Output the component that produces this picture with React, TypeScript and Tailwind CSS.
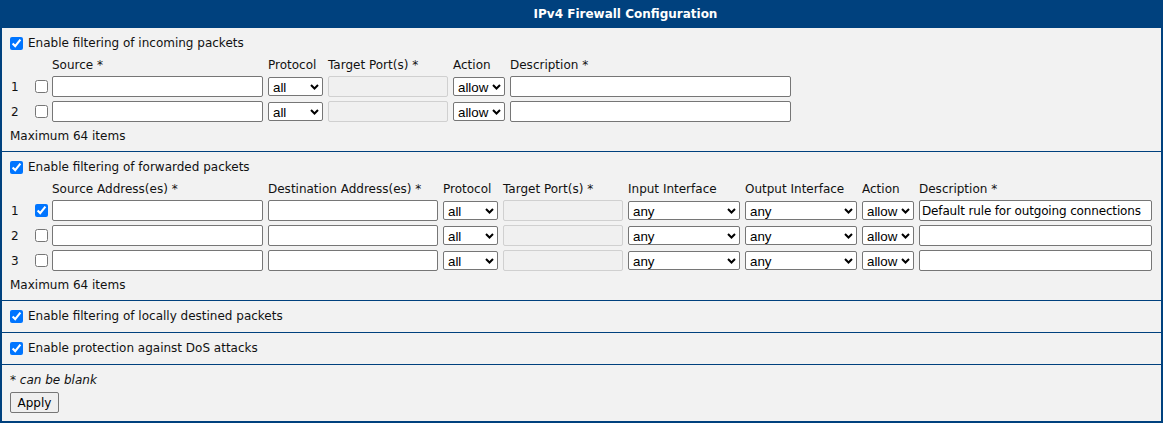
import React from "react";

const font = { fontFamily: '"DejaVu Sans", Verdana, sans-serif' };

const inputCls =
  "h-[21px] border border-[#767676] rounded-[2px] bg-white px-[2px] text-[12px] text-black outline-none";
const disabledCls =
  "h-[21px] border border-[#d0d0d0] rounded-[2px] bg-[#f0f0f0]";

function Cb({ checked }: { checked?: boolean }) {
  return (
    <input
      type="checkbox"
      defaultChecked={checked}
      className="m-0 h-[13px] w-[13px] shrink-0"
    />
  );
}

function EnableRow({ label }: { label: string }) {
  return (
    <label className="flex h-4 items-center gap-[5px]">
      <Cb checked />
      <span>{label}</span>
    </label>
  );
}

function Sel({ w, v, opts }: { w: string; v: string; opts: string[] }) {
  return (
    <div className={`relative h-[19px] ${w}`}>
      <select
        defaultValue={v}
        className="h-[19px] w-full appearance-none border border-[#767676] rounded-[2px] bg-white pl-[4px] pr-[14px] text-[13.33px] text-black [font-family:'Liberation_Sans',Arial,sans-serif] outline-none"
      >
        {opts.map((o) => (
          <option key={o}>{o}</option>
        ))}
      </select>
      <svg
        className="pointer-events-none absolute right-[4px] top-[7px]"
        width="9"
        height="6"
        viewBox="0 0 9 6"
      >
        <polyline
          points="1,1 4.5,4.5 8,1"
          fill="none"
          stroke="#000"
          strokeWidth="2"
        />
      </svg>
    </div>
  );
}

export default function App() {
  const inCols =
    "grid grid-cols-[20px_12px_211px_55px_120px_52px_281px] gap-x-[5px] items-center";
  const fwCols =
    "grid grid-cols-[20px_12px_211px_170px_55px_120px_112px_112px_52px_233px] gap-x-[5px] items-center";

  return (
    <div
      className="w-[1163px] h-[423px] bg-[#00417e] text-[12px] text-[#111]"
      style={font}
    >
      <div className="flex h-[28px] items-center justify-center pl-[88px] font-bold text-white">
        IPv4 Firewall Configuration
      </div>
      <div className="mx-[2px] h-[393px] bg-[#f2f2f2] flex flex-col">
        {/* Section 1 */}
        <div className="border-b border-[#00417e] pl-[8px] pt-[7px] pb-[7px]">
          <EnableRow label="Enable filtering of incoming packets" />
          <div className={`${inCols} mt-[5px] h-4`}>
            <span />
            <span />
            <span>Source *</span>
            <span>Protocol</span>
            <span>Target Port(s) *</span>
            <span>Action</span>
            <span>Description *</span>
          </div>
          {[1, 2].map((n) => (
            <div key={n} className={`${inCols} mt-[4px] h-[21px]`}>
              <span className="pl-px">{n}</span>
              <Cb />
              <input className={inputCls} />
              <Sel w="w-[55px]" v="all" opts={["all", "tcp", "udp", "icmp"]} />
              <input disabled className={disabledCls} />
              <Sel w="w-[52px]" v="allow" opts={["allow", "deny"]} />
              <input className={inputCls} />
            </div>
          ))}
          <div className="mt-[6px] h-4 flex items-center">Maximum 64 items</div>
        </div>

        {/* Section 2 */}
        <div className="border-b border-[#00417e] pl-[8px] pt-[7px] pb-[7px]">
          <EnableRow label="Enable filtering of forwarded packets" />
          <div className={`${fwCols} mt-[5px] h-4`}>
            <span />
            <span />
            <span>Source Address(es) *</span>
            <span>Destination Address(es) *</span>
            <span>Protocol</span>
            <span className="whitespace-nowrap">Target Port(s) *</span>
            <span className="whitespace-nowrap">Input Interface</span>
            <span className="whitespace-nowrap">Output Interface</span>
            <span>Action</span>
            <span>Description *</span>
          </div>
          {[1, 2, 3].map((n) => (
            <div key={n} className={`${fwCols} mt-[4px] h-[21px]`}>
              <span className="pl-px">{n}</span>
              <Cb checked={n === 1} />
              <input className={inputCls} />
              <input className={inputCls} />
              <Sel w="w-[55px]" v="all" opts={["all", "tcp", "udp", "icmp"]} />
              <input disabled className={disabledCls} />
              <Sel w="w-[112px]" v="any" opts={["any", "lan", "wan"]} />
              <Sel w="w-[112px]" v="any" opts={["any", "lan", "wan"]} />
              <Sel w="w-[52px]" v="allow" opts={["allow", "deny"]} />
              <input
                className={`${inputCls} tracking-[-0.15px]`}
                defaultValue={n === 1 ? "Default rule for outgoing connections" : ""}
                style={font}
              />
            </div>
          ))}
          <div className="mt-[6px] h-4 flex items-center">Maximum 64 items</div>
        </div>

        {/* Section 3 */}
        <div className="border-b border-[#00417e] pl-[8px] pt-[7px] pb-[8px]">
          <EnableRow label="Enable filtering of locally destined packets" />
        </div>

        {/* Section 4 */}
        <div className="border-b border-[#00417e] pl-[8px] pt-[7px] pb-[8px]">
          <EnableRow label="Enable protection against DoS attacks" />
        </div>

        {/* Footer */}
        <div className="pl-[8px] pt-[7px]">
          <div className="h-4 flex items-center italic">* can be blank</div>
          <button className="mt-[4px] h-[21px] w-[49px] border border-[#767676] rounded-[2px] bg-[#efefef] text-[12px] text-black">
            Apply
          </button>
        </div>
      </div>
    </div>
  );
}
